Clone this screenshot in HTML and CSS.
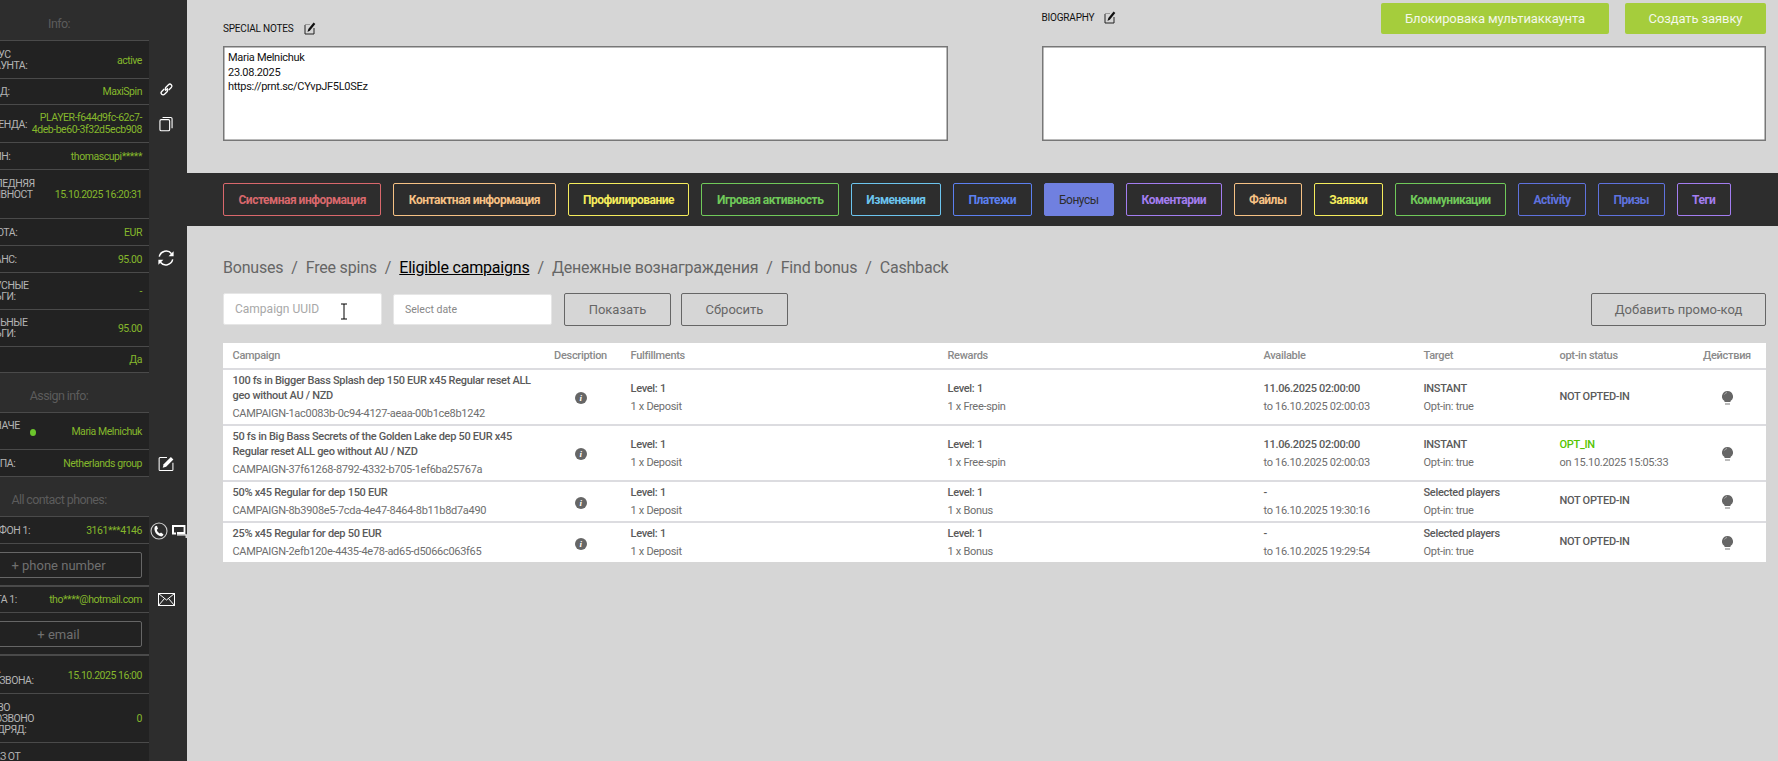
FILE: index.html
```html
<!DOCTYPE html>
<html lang="ru">
<head>
<meta charset="utf-8">
<title>Bonuses</title>
<link rel="stylesheet" href="styles.css">
</head>
<body>
<div class="page">
  <aside class="side">
    <div class="panel">
      <div class="sec-title">Info:</div>
      <div class="rows">
        <div class="row"><span class="lab">Статус аккаунта:</span><span class="val">active</span></div>
        <div class="row tight"><span class="lab">Бренд:</span><span class="val">MaxiSpin</span></div>
        <div class="row"><span class="lab">ID бренда:</span><span class="val id">PLAYER-f644d9fc-62c7-4deb-be60-3f32d5ecb908</span></div>
        <div class="row"><span class="lab">Логин:</span><span class="val">thomascupi*****</span></div>
        <div class="row"><span class="lab">Последняя активность</span><span class="val">15.10.2025 16:20:31</span></div>
        <div class="row"><span class="lab">Валюта:</span><span class="val">EUR</span></div>
        <div class="row"><span class="lab">Баланс:</span><span class="val">95.00</span></div>
        <div class="row tight"><span class="lab">Бонусные деньги:</span><span class="val">-</span></div>
        <div class="row tight"><span class="lab">Реальные деньги:</span><span class="val">95.00</span></div>
        <div class="row tight"><span class="lab">KYC:</span><span class="val">Да</span></div>
      </div>
      <div class="sec-title">Assign info:</div>
      <div class="rows">
        <div class="row tight"><span class="lab">Назначе<br>но</span><span class="dot"></span><span class="val">Maria Melnichuk</span></div>
        <div class="row"><span class="lab">Группа:</span><span class="val">Netherlands group</span></div>
      </div>
      <div class="sec-title">All contact phones:</div>
      <div class="rows">
        <div class="row"><span class="lab">Телефон 1:</span><span class="val">3161***4146</span></div>
        <div class="add-box"><input class="add-input" placeholder="+ phone number"></div>
        <div class="row tight"><span class="lab">Почта 1:</span><span class="val">tho****@hotmail.com</span></div>
        <div class="add-box"><input class="add-input" placeholder="+ email"></div>
        <div class="row"><span class="lab">Дата перезвона:</span><span class="val">15.10.2025 16:00</span></div>
        <div class="row"><span class="lab">Кол-во недозвонов подряд:</span><span class="val">0</span></div>
        <div class="row"><span class="lab">Заказ от клиента:</span><span class="val"></span></div>
      </div>
    </div>
    <div class="rail">
      <svg class="ri ri-link" viewBox="0 0 16 16" fill="none" stroke="#fff" stroke-width="1.400"><path d="M6.600 9.400 9.400 6.600M5.600 7.400 2.900 10.100a2.100 2.100 0 0 0 3 3l2.700-2.700a2.100 2.100 0 0 0 0-3M10.400 8.600l2.700-2.700a2.100 2.100 0 0 0-3-3L7.400 5.600a2.100 2.100 0 0 0 0 3"/></svg>
      <svg class="ri ri-copy" viewBox="0 0 15 16" fill="none" stroke="#fff" stroke-width="1.200"><rect x="1" y="3.300" width="10.400" height="12" rx="1.400"/><path d="M3.800 1h8.800a1.400 1.400 0 0 1 1.400 1.400v10.100"/></svg>
      <svg class="ri ri-sync" viewBox="0 0 18 18" fill="none" stroke="#fff" stroke-width="1.500"><path d="M2.300 7.600A7 7 0 0 1 14.600 4.800"/><path d="M15.700 10.400A7 7 0 0 1 3.400 13.200"/><path d="M16.600 2.200v5h-5z" fill="#fff" stroke="none"/><path d="M1.400 15.800v-5h5z" fill="#fff" stroke="none"/></svg>
      <svg class="ri ri-edit" viewBox="0 0 18 18" fill="none" stroke="#fff" stroke-width="1.100"><path d="M9.500 2.700H2.200a1 1 0 0 0-1 1v11.800a1 1 0 0 0 1 1h12.600a1 1 0 0 0 1-1V8.200"/><path d="M5 13.500l1-3.600 7.600-7.800 2.700 2.600-7.700 7.800z" fill="#fff" stroke="none"/></svg>
      <div class="ri-pair">
        <svg class="ri-phone" viewBox="0 0 18 18" fill="none"><circle cx="9" cy="9" r="8" stroke="#ccc" stroke-width="1.100"/><path d="M5.200 4.300 6.900 3.800 8 6.800 6.800 7.700c.4 1.600 1.500 3 3 3.800l1.200-.9 2.500 2-1 1.400c-1 .8-2.600.3-4.200-.8C6.300 12.500 4.800 10 4.500 7.600c-.1-1.400.1-2.600.7-3.300z" fill="#fff"/></svg>
        <svg class="ri-chat" viewBox="0 0 15 13" fill="none"><path d="M1 1h11.500v7H5" stroke="#fff" stroke-width="1.800"/><path d="M1 0v8.500h3" stroke="#fff" stroke-width="2"/><path d="M5 9.800h9.200V13" stroke="#fff" stroke-width="1.200"/></svg>
      </div>
      <svg class="ri ri-mail" viewBox="0 0 17 13" fill="none" stroke="#fff" stroke-width="1"><rect x=".5" y=".5" width="16" height="12"/><path d="M.5 .5 8.500 7l8-6.500M.5 12.500l6-7M16.500 12.500l-6-7"/></svg>
    </div>
  </aside>

  <main class="main">
    <section class="notes">
      <div class="note">
        <div class="note-head head-low">
          <span class="note-label">Special notes</span>
          <svg class="note-icon" viewBox="0 0 12 13" fill="none"><path d="M1 3v9h9V6" stroke="#222" stroke-width="1"/><path d="M1 2.500h5" stroke="#999" stroke-width="1"/><path d="M3.500 10 4.300 7 9.600 .6l1.700 1.300-5.300 6.500z" fill="#111"/></svg>
        </div>
        <div class="note-box">Maria Melnichuk<br>23.08.2025<br>https://prnt.sc/CYvpJF5L0SEz</div>
      </div>
      <div class="note">
        <div class="note-head head-high">
          <span class="note-label">Biography</span>
          <svg class="note-icon" viewBox="0 0 12 13" fill="none"><path d="M1 3v9h9V6" stroke="#222" stroke-width="1"/><path d="M1 2.500h5" stroke="#999" stroke-width="1"/><path d="M3.500 10 4.300 7 9.600 .6l1.700 1.300-5.300 6.500z" fill="#111"/></svg>
          <div class="head-actions">
            <button class="green-btn gb-wide">Блокировака мультиаккаунта</button>
            <button class="green-btn gb-narrow">Создать заявку</button>
          </div>
        </div>
        <div class="note-box"></div>
      </div>
    </section>

    <nav class="tabs">
      <a class="tab t-red">Системная информация</a>
      <a class="tab t-orange">Контактная информация</a>
      <a class="tab t-yellow">Профилирование</a>
      <a class="tab t-green">Игровая активность</a>
      <a class="tab t-cyan">Изменения</a>
      <a class="tab t-blue">Платежи</a>
      <a class="tab t-active">Бонусы</a>
      <a class="tab t-purple">Коментарии</a>
      <a class="tab t-orange">Файлы</a>
      <a class="tab t-yellow">Заявки</a>
      <a class="tab t-green">Коммуникации</a>
      <a class="tab t-indigo">Activity</a>
      <a class="tab t-indigo">Призы</a>
      <a class="tab t-purple">Теги</a>
    </nav>

    <section class="content">
      <div class="crumbs">
        <a>Bonuses</a><i>/</i><a>Free spins</a><i>/</i><a class="on">Eligible campaigns</a><i>/</i><a>Денежные вознаграждения</a><i>/</i><a>Find bonus</a><i>/</i><a>Cashback</a>
      </div>
      <div class="filters">
        <div class="field">
          <input class="f-input f-uuid" placeholder="Campaign UUID">
          <svg class="ibeam" viewBox="0 0 8 17" fill="none"><path d="M1 1h6M4 1v15M1 16h6" stroke="#fff" stroke-width="3"/><path d="M1 1h6M4 1v15M1 16h6" stroke="#000" stroke-width="1"/></svg>
        </div>
        <input class="f-input f-date" placeholder="Select date">
        <button class="o-btn">Показать</button>
        <button class="o-btn">Сбросить</button>
        <button class="o-btn o-add">Добавить промо-код</button>
      </div>
      <table class="grid">
        <thead>
          <tr>
            <th class="c1">Campaign</th><th class="c2">Description</th><th class="c3">Fulfillments</th><th class="c4">Rewards</th><th class="c5">Available</th><th class="c6">Target</th><th class="c7">opt-in status</th><th class="c8">Действия</th>
          </tr>
        </thead>
        <tbody>
          <tr>
            <td><div class="t">100 fs in Bigger Bass Splash dep 150 EUR x45 Regular reset ALL geo without AU / NZD</div><div class="s">CAMPAIGN-1ac0083b-0c94-4127-aeaa-00b1ce8b1242</div></td>
            <td class="mid"><span class="info">i</span></td>
            <td><div class="t">Level: 1</div><div class="s">1 x Deposit</div></td>
            <td><div class="t">Level: 1</div><div class="s">1 x Free-spin</div></td>
            <td><div class="t">11.06.2025 02:00:00</div><div class="s">to 16.10.2025 02:00:03</div></td>
            <td><div class="t">INSTANT</div><div class="s">Opt-in: true</div></td>
            <td><div class="t lift">NOT OPTED-IN</div></td>
            <td class="mid"><svg class="bulb" viewBox="0 0 11 14"><path d="M5.500 0a5.500 5.500 0 0 1 3 10.100V11h-6v-.9A5.500 5.500 0 0 1 5.500 0z" fill="#666"/><path d="M3 12h5v2H3z" fill="#bbb"/><path d="M2.500 3.500A3.500 3.500 0 0 1 5 1.500" stroke="#aaa" fill="none"/></svg></td>
          </tr>
          <tr>
            <td><div class="t">50 fs in Big Bass Secrets of the Golden Lake dep 50 EUR x45 Regular reset ALL geo without AU / NZD</div><div class="s">CAMPAIGN-37f61268-8792-4332-b705-1ef6ba25767a</div></td>
            <td class="mid"><span class="info">i</span></td>
            <td><div class="t">Level: 1</div><div class="s">1 x Deposit</div></td>
            <td><div class="t">Level: 1</div><div class="s">1 x Free-spin</div></td>
            <td><div class="t">11.06.2025 02:00:00</div><div class="s">to 16.10.2025 02:00:03</div></td>
            <td><div class="t">INSTANT</div><div class="s">Opt-in: true</div></td>
            <td><div class="t ok">OPT_IN</div><div class="s">on 15.10.2025 15:05:33</div></td>
            <td class="mid"><svg class="bulb" viewBox="0 0 11 14"><path d="M5.500 0a5.500 5.500 0 0 1 3 10.100V11h-6v-.9A5.500 5.500 0 0 1 5.500 0z" fill="#666"/><path d="M3 12h5v2H3z" fill="#bbb"/><path d="M2.500 3.500A3.500 3.500 0 0 1 5 1.500" stroke="#aaa" fill="none"/></svg></td>
          </tr>
          <tr>
            <td><div class="t">50% x45 Regular for dep 150 EUR</div><div class="s">CAMPAIGN-8b3908e5-7cda-4e47-8464-8b11b8d7a490</div></td>
            <td class="mid"><span class="info">i</span></td>
            <td><div class="t">Level: 1</div><div class="s">1 x Deposit</div></td>
            <td><div class="t">Level: 1</div><div class="s">1 x Bonus</div></td>
            <td><div class="t">-</div><div class="s">to 16.10.2025 19:30:16</div></td>
            <td><div class="t">Selected players</div><div class="s">Opt-in: true</div></td>
            <td><div class="t lift">NOT OPTED-IN</div></td>
            <td class="mid"><svg class="bulb" viewBox="0 0 11 14"><path d="M5.500 0a5.500 5.500 0 0 1 3 10.100V11h-6v-.9A5.500 5.500 0 0 1 5.500 0z" fill="#666"/><path d="M3 12h5v2H3z" fill="#bbb"/><path d="M2.500 3.500A3.500 3.500 0 0 1 5 1.500" stroke="#aaa" fill="none"/></svg></td>
          </tr>
          <tr>
            <td><div class="t">25% x45 Regular for dep 50 EUR</div><div class="s">CAMPAIGN-2efb120e-4435-4e78-ad65-d5066c063f65</div></td>
            <td class="mid"><span class="info">i</span></td>
            <td><div class="t">Level: 1</div><div class="s">1 x Deposit</div></td>
            <td><div class="t">Level: 1</div><div class="s">1 x Bonus</div></td>
            <td><div class="t">-</div><div class="s">to 16.10.2025 19:29:54</div></td>
            <td><div class="t">Selected players</div><div class="s">Opt-in: true</div></td>
            <td><div class="t lift">NOT OPTED-IN</div></td>
            <td class="mid"><svg class="bulb" viewBox="0 0 11 14"><path d="M5.500 0a5.500 5.500 0 0 1 3 10.100V11h-6v-.9A5.500 5.500 0 0 1 5.500 0z" fill="#666"/><path d="M3 12h5v2H3z" fill="#bbb"/><path d="M2.500 3.500A3.500 3.500 0 0 1 5 1.500" stroke="#aaa" fill="none"/></svg></td>
          </tr>
        </tbody>
      </table>
    </section>
  </main>
</div>
</body>
</html>
```

FILE: styles.css
```css
* { box-sizing: border-box; }
html, body { margin: 0; height: 100%; overflow: hidden; }
body { font-family: Roboto, "Liberation Sans", sans-serif; background: #d6d6d6; color: #666; }
.page { display: flex; height: 761px; }

/* sidebar */
.side { width: 187px; flex: none; background: #2d2d2d; display: flex; overflow: hidden; }
.panel { width: 180px; flex: none; margin-left: -31px; }
.sec-title { height: 39px; padding-top: 6px; display: flex; align-items: center; justify-content: center; font-size: 12.500px; letter-spacing: -.6px; color: #5c5c5c; }
.sec-title:first-child { height: 40px; }
.rows { background: #222; border-top: 1px solid #4a4a4a; }
.row { display: flex; align-items: center; padding: 8px 7px 7px 6px; border-bottom: 1px solid #4a4a4a; font-size: 10.500px; line-height: 11px; }
.row.tight { padding-top: 7px; }
.lab { width: 60px; margin-right: -4px; flex: none; text-transform: uppercase; color: #b4b4b4; letter-spacing: -.45px; overflow-wrap: anywhere; }
.val { flex: 1; min-width: 0; text-align: right; color: #85b82c; letter-spacing: -.45px; }
.val.id { line-height: 12px; margin: -1px 0; }
.dot { width: 6px; height: 7px; border-radius: 50%; background: #6cc52c; flex: none; margin: 2px -6px 0 -1px; }
.add-box { padding: 8px 7px 7px 6px; border-bottom: 2px solid #4a4a4a; }
.add-input { display: block; width: 100%; height: 26px; background: transparent; border: 1px solid #666; border-radius: 2px; color: #777; font: 13px Roboto, sans-serif; text-align: center; outline: none; padding: 0; }
.add-input::placeholder { color: #707070; opacity: 1; }

.rail { flex: 1; min-width: 0; padding-right: 4px; display: flex; flex-direction: column; align-items: center; }
.ri { display: block; flex: none; }
.ri-link { width: 15px; height: 15px; margin-top: 82px; }
.ri-copy { width: 14px; height: 16px; margin-top: 19px; }
.ri-sync { width: 18px; height: 18px; margin-top: 117px; }
.ri-edit { width: 17px; height: 17px; margin-top: 188px; }
.ri-pair { display: flex; align-items: center; gap: 4px; margin-top: 50px; margin-left: 4px; flex: none; }
.ri-phone { width: 18px; height: 18px; flex: none; }
.ri-chat { width: 15px; height: 13px; flex: none; }
.ri-mail { width: 17px; height: 13px; margin-top: 53px; }

/* main */
.main { flex: 1; min-width: 0; display: flex; flex-direction: column; }
.notes { height: 173px; flex: none; padding: 0 12px 0 36px; display: grid; grid-template-columns: 724.500px 724.500px; column-gap: 94px; }
.note-head { height: 46px; display: flex; align-items: flex-start; }
.head-low { padding-top: 23px; }
.head-high { padding-top: 12px; }
.note-label { font-size: 10px; line-height: 12px; letter-spacing: -.2px; text-transform: uppercase; color: #111; }
.note-icon { width: 12px; height: 13px; margin: -1px 0 0 10px; flex: none; }
.head-actions { margin: -9px 0 0 auto; display: flex; gap: 16px; }
.green-btn { height: 31px; border: 0; border-radius: 2px; background: #a5cd3c; color: #f4f7ea; font: 13px Roboto, sans-serif; letter-spacing: -.1px; padding: 0; }
.gb-wide { width: 228px; }
.gb-narrow { width: 141px; }
.note-box { height: 95px; background: #fff; border: 1px solid #777; box-shadow: inset 0 0 0 .5px #777; padding: 4px; font-size: 11px; line-height: 14.600px; letter-spacing: -.3px; color: #111; }

.tabs { height: 53px; flex: none; background: #2d2d2d; padding: 10px 12px 10px 36px; display: flex; gap: 12px; }
.tab { height: 33px; padding: 0 14.500px; display: flex; align-items: center; border: 1px solid; border-radius: 2px; font-size: 12px; font-weight: 700; letter-spacing: -.5px; white-space: nowrap; }
.t-red { color: #d9686c; border-color: #d9686c; }
.t-orange { color: #f6c184; border-color: #f6c184; }
.t-yellow { color: #f5ec5c; border-color: #f5ec5c; }
.t-green { color: #70c95a; border-color: #70c95a; }
.t-cyan { color: #6cc4ee; border-color: #6cc4ee; }
.t-blue { color: #5c80f0; border-color: #5c80f0; }
.t-purple { color: #a37df0; border-color: #a37df0; }
.t-indigo { color: #5f72de; border-color: #5f72de; }
.t-active { background: #7080e0; border-color: #7080e0; color: #2d2d2d; font-weight: 400; }

.content { flex: 1; padding: 0 12px 0 36px; }
.crumbs { height: 67px; padding-top: 17px; display: flex; align-items: center; font-size: 16px; line-height: 20px; letter-spacing: -.2px; color: #666; white-space: nowrap; }
.crumbs i { font-style: normal; margin: 0 8px; }
.crumbs .on { color: #000; text-decoration: underline; }
.filters { height: 50px; display: flex; align-items: flex-start; }
.field { position: relative; margin-right: 11px; }
.f-input { display: block; background: #fff; border: 1px solid #e6e6e6; border-radius: 2px; outline: none; font-family: Roboto, sans-serif; color: #999; }
.f-input::placeholder { color: #a8a8a8; opacity: 1; }
.f-uuid { width: 159px; height: 32px; padding: 0 11px; font-size: 12px; }
.f-date { width: 159px; height: 31px; padding: 0 11px; font-size: 10.500px; margin: 1px 12px 0 0; }
.f-date::placeholder { color: #888; }
.ibeam { position: absolute; left: 117px; top: 10px; width: 8px; height: 17px; }
.o-btn { height: 33px; width: 107px; margin-right: 10px; background: transparent; border: 1px solid #666; border-radius: 2px; color: #666; font: 13px Roboto, sans-serif; padding: 0; }
.o-add { width: 175px; margin: 0 0 0 auto; }

.grid { width: 1543px; table-layout: fixed; border-collapse: collapse; background: #fff; letter-spacing: -.3px; }
.c1 { width: 322px; } .c2 { width: 76px; } .c3 { width: 317px; } .c4 { width: 316px; }
.c5 { width: 160px; } .c6 { width: 136px; } .c7 { width: 143px; } .c8 { width: 73px; }
.grid th { height: 26px; padding: 0 9.500px; text-align: left; font-size: 11px; font-weight: 500; color: #8a8a8a; border-bottom: 2px solid #dcdce0; white-space: nowrap; }
.grid th.c2, .grid th.c8 { text-align: center; padding: 0 5px 0 0; }
.grid td { padding: 3px 9.500px 3px; vertical-align: middle; border-bottom: 2px solid #dcdce0; font-size: 11px; }
.grid tr:last-child td { border-bottom: 0; }
.grid td.mid { text-align: center; padding: 1px 5px 0 0; }
.t { line-height: 15px; font-weight: 500; color: #5a5a5a; }
.s { line-height: 15px; margin-top: 3px; color: #6e6e6e; }
.lift { margin-top: -2px; }
.ok { color: #55c400; }
.info { display: inline-flex; width: 12px; height: 12px; border-radius: 50%; background: #666; color: #fff; font: italic 700 9px/12px "Liberation Serif", serif; align-items: center; justify-content: center; }
.bulb { display: inline-block; width: 11px; height: 14px; vertical-align: middle; }
```
